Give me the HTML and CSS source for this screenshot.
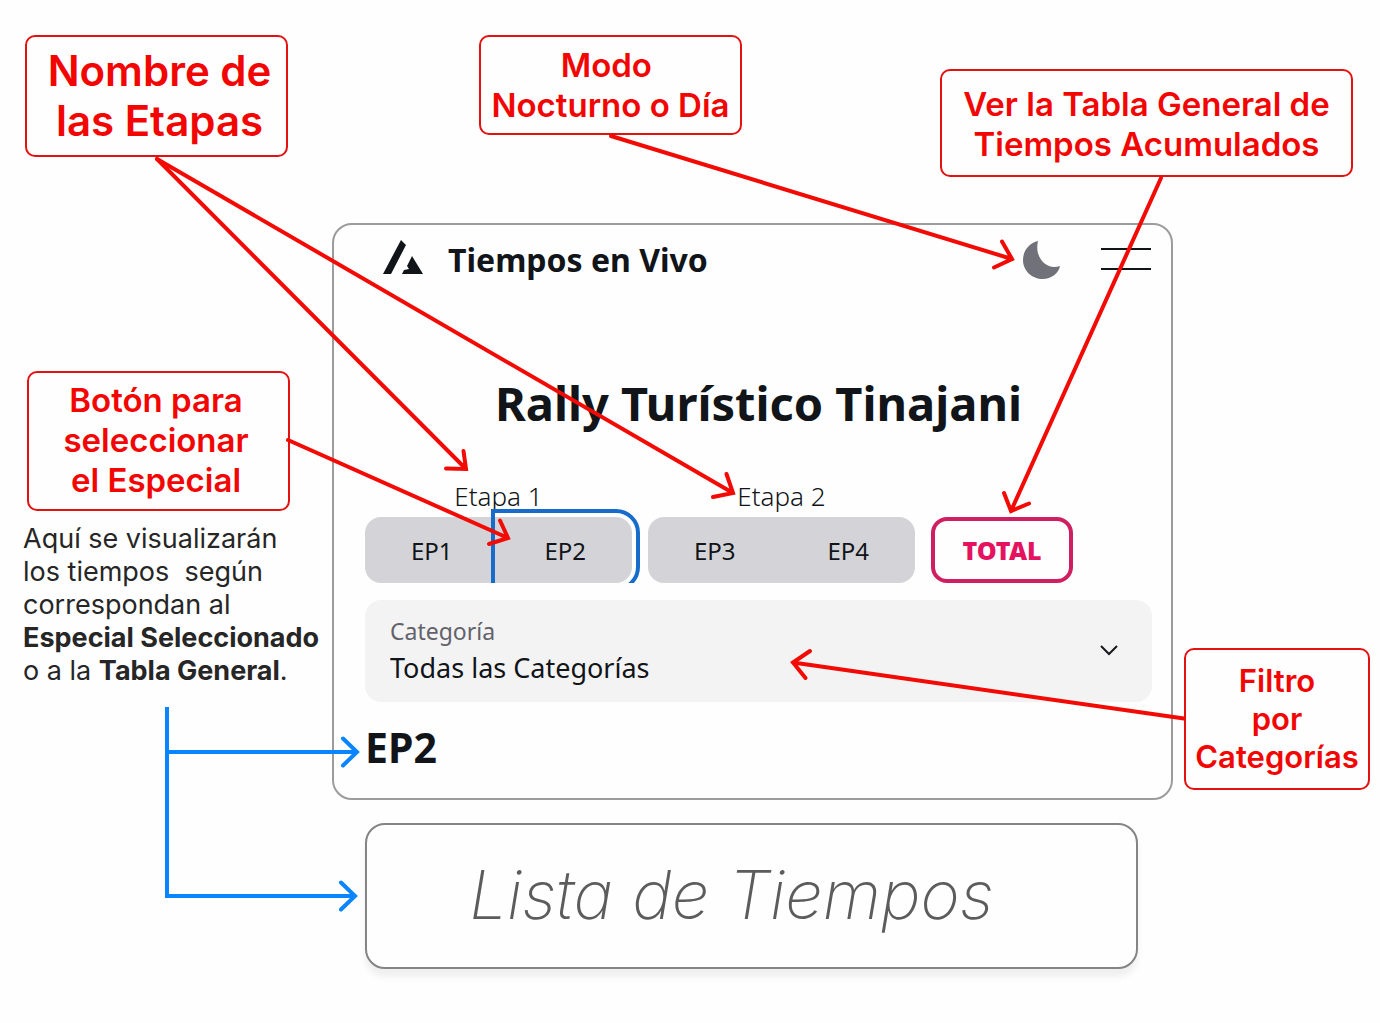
FILE: index.html
```html
<!DOCTYPE html>
<html lang="es">
<head>
<meta charset="utf-8">
<meta name="viewport" content="width=device-width, initial-scale=1">
<title>Tiempos en Vivo</title>
<link rel="stylesheet" href="styles.css">
</head>
<body>
<main class="board">
  <section class="top-notes">
    <p class="note note-large note-stages">Nombre de<br>las Etapas</p>
    <p class="note note-mode">Modo&nbsp;<br>Nocturno o Día</p>
    <p class="note note-total">Ver la Tabla General de<br>Tiempos Acumulados</p>
  </section>

  <section class="body">
    <aside class="left-notes">
      <p class="note note-special">Botón para<br>seleccionar<br>el Especial</p>
      <p class="explain">Aquí se visualizarán<br>los tiempos&nbsp; según<br>correspondan al<br><strong>Especial Seleccionado</strong><br>o a la <strong>Tabla General</strong>.</p>
    </aside>

    <div class="center">
      <article class="panel">
        <header class="bar">
          <svg class="logo" viewBox="0 0 42 36" aria-hidden="true"><path d="M1 34 19 0l5 5L9 34zM20 34l2-4 5-1-2-3 5-10 11 18z"/></svg>
          <span class="brand">Tiempos en Vivo</span>
          <button class="icon-button" type="button" aria-label="Modo nocturno">
            <svg class="moon" viewBox="0 0 38 40" aria-hidden="true"><path d="M15 1C13 10 15 17 21 23c5 4 10 5 16 3-1 7-9 13-17 13C9 39 0 31 0 20 0 11 6 3 15 1z"/></svg>
          </button>
          <button class="icon-button menu" type="button" aria-label="Menú"></button>
        </header>
        <h1 class="title">Rally Turístico Tinajani</h1>
        <div class="stages">
          <div class="stage">
            <span class="stage-name">Etapa 1</span>
            <div class="group">
              <button class="special" type="button">EP1</button>
              <button class="special selected" type="button">EP2</button>
            </div>
          </div>
          <div class="stage">
            <span class="stage-name">Etapa 2</span>
            <div class="group">
              <button class="special" type="button">EP3</button>
              <button class="special" type="button">EP4</button>
            </div>
          </div>
          <button class="total" type="button">TOTAL</button>
        </div>
        <div class="filter">
          <label class="filter-label" for="category">Categoría</label>
          <select class="filter-select" id="category">
            <option>Todas las Categorías</option>
          </select>
          <svg class="chevron" viewBox="0 0 18 12" aria-hidden="true"><path d="M1 1l8 8 8-8"/></svg>
        </div>
        <h2 class="current">EP2</h2>
      </article>
      <section class="times">Lista de Tiempos</section>
    </div>

    <aside class="right-notes">
      <p class="note note-medium">Filtro<br>por<br>Categorías</p>
    </aside>
  </section>

  <svg class="arrows" viewBox="0 0 1380 1023" preserveAspectRatio="none" aria-hidden="true">
    <g class="red">
      <path d="M157 159 466 469M446 468.500 466 469 463.500 451"/>
      <path d="M157 159 733 493M726.500 474 733 493 713 497"/>
      <path d="M611 136 1012 259M1002 241.500 1012 259 994 267.500"/>
      <path d="M1161 178 1011 511M1004 493 1011 511 1029 503.500"/>
      <path d="M288 440 508 538M500 520.500 508 538 489 544"/>
      <path d="M1184 718.500 793 662.500M810 651 793 662.500 805.500 678"/>
    </g>
    <g class="blue">
      <path class="trunk" d="M167 707V896H355M167 752H357"/>
      <path d="M341 882.500 355 896 341 909.500M343 738.500 357 752 343 765.500"/>
    </g>
  </svg>
</main>
</body>
</html>
```
FILE: styles.css
```css
* {
  box-sizing: border-box;
}

body {
  margin: 0;
  background: #fefefe;
  color: #111418;
  font-family: "Noto Sans", sans-serif;
}

h1,
h2,
p {
  margin: 0;
}

button,
select {
  margin: 0;
  padding: 0;
  border: 0;
  background: none;
  color: inherit;
  font: inherit;
}

.board {
  position: relative;
  padding-bottom: 54px;
}

/* Callouts */

.top-notes {
  display: grid;
  grid-template-columns: 25fr 263fr 191fr 263fr 198fr 413fr 27fr;
  align-items: start;
  padding: 35px 0 46px;
}

.note {
  padding: 8px 0;
  border: 2px solid #e3110f;
  border-radius: 10px;
  color: #f20603;
  font: 600 33px/40px Inter, sans-serif;
  text-align: center;
  white-space: nowrap;
}

.note-large {
  padding: 9px 0 9px 6px;
  font-size: 42px;
  line-height: 50px;
}

.note-medium {
  padding: 12px 0;
  font-size: 31px;
  line-height: 38px;
}

.note-stages {
  grid-column: 2;
}

.note-mode {
  grid-column: 4;
}

.note-total {
  grid-column: 6;
  margin-top: 34px;
  padding: 13px 0 11px;
}

.body {
  display: grid;
  grid-template-columns: 332fr 841fr 207fr;
}

.left-notes {
  padding: 148px 0 0 23px;
}

.note-special {
  margin: 0 42px 0 4px;
  padding: 7px 5px 9px 0;
}

.explain {
  margin-top: 11px;
  color: #262626;
  font: 400 27px/33px Inter, sans-serif;
  white-space: nowrap;
}

.explain strong {
  font-weight: 700;
}

.right-notes {
  padding: 425px 10px 0 11px;
}

/* App panel */

.panel {
  padding: 0 19px 23px 31px;
  border: 2px solid #9c9c9c;
  border-radius: 20px;
}

.bar {
  display: flex;
  align-items: center;
  height: 70px;
  padding-left: 17px;
}

.logo {
  width: 42px;
  height: 36px;
  margin-right: 24px;
  margin-bottom: 4px;
  fill: #111418;
}

.brand {
  flex: 1;
  font-size: 32px;
  font-weight: 700;
  line-height: 44px;
}

.icon-button {
  display: block;
  cursor: pointer;
}

.moon {
  display: block;
  width: 38px;
  height: 40px;
  fill: #71717a;
}

.menu {
  width: 50px;
  height: 22px;
  margin: 0 1px 2px 40px;
  border-top: 2px solid #111418;
  border-bottom: 2px solid #111418;
}

.title {
  margin-top: 78px;
  font-size: 47px;
  font-weight: 700;
  line-height: 60px;
  text-align: center;
  white-space: nowrap;
}

.stages {
  display: flex;
  align-items: flex-end;
  gap: 16px;
  margin-top: 45px;
}

.stage {
  display: flex;
  flex-direction: column;
  flex: 0 1 267px;
  gap: 3px;
}

.stage-name {
  font-size: 26px;
  font-weight: 300;
  line-height: 36px;
  text-align: center;
}

.group {
  display: flex;
  border-radius: 16px;
  background: #d4d4d8;
  clip-path: inset(-12px -12px 0 -12px);
}

.special {
  flex: 1;
  height: 66px;
  font-size: 24px;
  cursor: pointer;
}

.selected {
  border-radius: 0 16px 16px 0;
  outline: 4px solid #166bcb;
  outline-offset: 4px;
}

.total {
  flex: 0 1 142px;
  height: 66px;
  border: 4px solid #d01f60;
  border-radius: 16px;
  color: #e4125f;
  font-size: 25px;
  font-weight: 900;
  cursor: pointer;
}

.filter {
  display: grid;
  align-items: center;
  margin-top: 17px;
  border-radius: 16px;
  background: #f3f3f4;
}

.filter-label,
.filter-select,
.chevron {
  grid-area: 1 / 1;
}

.filter-label {
  align-self: start;
  padding: 16px 25px 0;
  color: #62626a;
  font-size: 23px;
  line-height: 30px;
}

.filter-select {
  width: 100%;
  height: 102px;
  padding: 32px 25px 0;
  appearance: none;
  font-size: 27px;
  cursor: pointer;
}

.chevron {
  justify-self: end;
  width: 18px;
  height: 12px;
  margin-right: 34px;
  fill: none;
  stroke: #18181b;
  stroke-width: 2;
  pointer-events: none;
}

.current {
  margin-top: 17px;
  font-size: 41px;
  font-weight: 700;
  line-height: 56px;
}

.times {
  margin: 23px 35px 0 33px;
  padding: 28px 40px 30px 0;
  border: 2px solid #848484;
  border-radius: 20px;
  background: #fefefe;
  box-shadow: 0 8px 6px rgb(0 0 0 / 6%);
  color: #5c5c5c;
  font: italic 200 67px/84px Inter, sans-serif;
  text-align: center;
  white-space: nowrap;
}

/* Arrows drawn over the board */

.arrows {
  position: absolute;
  inset: 0;
  width: 100%;
  height: 100%;
  fill: none;
  stroke-width: 4;
  pointer-events: none;
}

.red {
  stroke: #f20a04;
}

.blue {
  stroke: #0a84ff;
}

.arrows path {
  stroke-linecap: round;
  stroke-linejoin: miter;
}

.arrows .trunk {
  stroke-linecap: butt;
}
```
